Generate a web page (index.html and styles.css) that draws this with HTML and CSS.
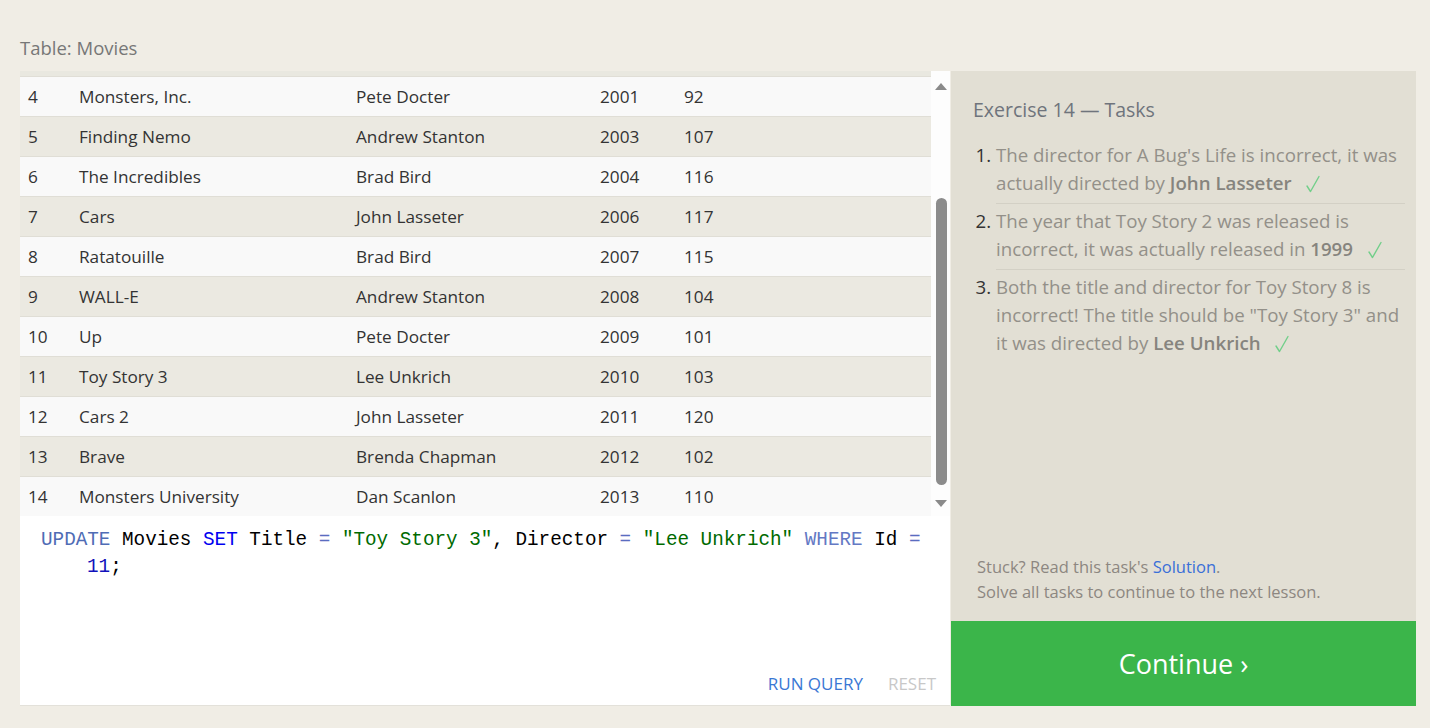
FILE: index.html
```html
<!DOCTYPE html>
<html>
<head>
<meta charset="utf-8">
<link rel="stylesheet" href="styles.css">
</head>
<body>
<div class="page">
  <div class="label">Table: Movies</div>
  <div class="workspace">
    <div class="left">
      <div class="table-wrap">
        <div class="viewport">
          <div class="cut-row"></div>
          <div class="row"><span class="c1">4</span><span class="c2">Monsters, Inc.</span><span class="c3">Pete Docter</span><span class="c4">2001</span><span class="c5">92</span></div>
          <div class="row alt"><span class="c1">5</span><span class="c2">Finding Nemo</span><span class="c3">Andrew Stanton</span><span class="c4">2003</span><span class="c5">107</span></div>
          <div class="row"><span class="c1">6</span><span class="c2">The Incredibles</span><span class="c3">Brad Bird</span><span class="c4">2004</span><span class="c5">116</span></div>
          <div class="row alt"><span class="c1">7</span><span class="c2">Cars</span><span class="c3">John Lasseter</span><span class="c4">2006</span><span class="c5">117</span></div>
          <div class="row"><span class="c1">8</span><span class="c2">Ratatouille</span><span class="c3">Brad Bird</span><span class="c4">2007</span><span class="c5">115</span></div>
          <div class="row alt"><span class="c1">9</span><span class="c2">WALL-E</span><span class="c3">Andrew Stanton</span><span class="c4">2008</span><span class="c5">104</span></div>
          <div class="row"><span class="c1">10</span><span class="c2">Up</span><span class="c3">Pete Docter</span><span class="c4">2009</span><span class="c5">101</span></div>
          <div class="row alt"><span class="c1">11</span><span class="c2">Toy Story 3</span><span class="c3">Lee Unkrich</span><span class="c4">2010</span><span class="c5">103</span></div>
          <div class="row"><span class="c1">12</span><span class="c2">Cars 2</span><span class="c3">John Lasseter</span><span class="c4">2011</span><span class="c5">120</span></div>
          <div class="row alt"><span class="c1">13</span><span class="c2">Brave</span><span class="c3">Brenda Chapman</span><span class="c4">2012</span><span class="c5">102</span></div>
          <div class="row"><span class="c1">14</span><span class="c2">Monsters University</span><span class="c3">Dan Scanlon</span><span class="c4">2013</span><span class="c5">110</span></div>
        </div>
        <div class="scrollbar">
          <div class="arrow up"></div>
          <div class="track"><div class="thumb"></div></div>
          <div class="arrow down"></div>
        </div>
      </div>
      <div class="editor">
        <div class="code">
          <div class="line"><span class="kw">UPDATE</span> Movies <span class="kw2">SET</span> Title <span class="op">=</span> <span class="str">"Toy Story 3"</span>, Director <span class="op">=</span> <span class="str">"Lee Unkrich"</span> <span class="kw3">WHERE</span> Id <span class="op">=</span></div>
          <div class="line indent"><span class="num">11</span>;</div>
        </div>
        <div class="actions">
          <span class="btn run">RUN QUERY</span>
          <span class="btn reset">RESET</span>
        </div>
      </div>
    </div>
    <div class="right">
      <div class="tasks">
        <h2 class="heading">Exercise 14 — Tasks</h2>
        <ol class="task-list">
          <li>The director for A Bug's Life is incorrect, it was actually directed by <b>John Lasseter</b> <svg class="check" width="14" height="18" viewBox="0 0 14 18"><polyline points="1,11 4.5,16.5 13,1.5" fill="none" stroke="#72cf8a" stroke-width="1.4" stroke-linecap="round" stroke-linejoin="round"/></svg></li>
          <li>The year that Toy Story 2 was released is incorrect, it was actually released in <b>1999</b> <svg class="check" width="14" height="18" viewBox="0 0 14 18"><polyline points="1,11 4.5,16.5 13,1.5" fill="none" stroke="#72cf8a" stroke-width="1.4" stroke-linecap="round" stroke-linejoin="round"/></svg></li>
          <li>Both the title and director for Toy Story 8 is incorrect! The title should be "Toy Story 3" and it was directed by <b>Lee Unkrich</b> <svg class="check" width="14" height="18" viewBox="0 0 14 18"><polyline points="1,11 4.5,16.5 13,1.5" fill="none" stroke="#72cf8a" stroke-width="1.4" stroke-linecap="round" stroke-linejoin="round"/></svg></li>
        </ol>
      </div>
      <div class="help">
        <div>Stuck? Read this task's <span class="link">Solution</span>.</div>
        <div>Solve all tasks to continue to the next lesson.</div>
      </div>
      <div class="continue">Continue ›</div>
    </div>
  </div>
</div>
</body>
</html>
```

FILE: styles.css
```css
* { box-sizing: border-box; }
html, body { margin: 0; padding: 0; }
body {
  background: #f0ede5;
  font-family: "Open Sans", "Noto Sans", sans-serif;
  color: #333;
  width: 1430px;
  height: 728px;
  overflow: hidden;
}
.page { padding: 0 14px 0 20px; }
.label {
  padding-top: 35px;
  height: 71px;
  font-size: 18.5px;
  line-height: 26px;
  color: #777;
}
.workspace { display: flex; height: 635px; }
.left { width: 930px; display: flex; flex-direction: column; }
.table-wrap { display: flex; height: 445px; flex: none; background: #fff; }
.viewport { width: 911px; overflow: hidden; }
.cut-row { height: 6px; background: #e9e8e0; border-bottom: 1px solid #e0ded6; }
.row {
  display: flex;
  height: 40px;
  align-items: center;
  background: #f9f9f9;
  border-bottom: 1px solid #e0ded6;
  font-size: 17.2px;
  color: #333;
}
.row.alt { background: #ebe9e1; }
.row span { padding-left: 8px; white-space: nowrap; }
.c1 { width: 51px; }
.c2 { width: 277px; }
.c3 { width: 244px; }
.c4 { width: 84px; }
.c5 { flex: 1; }
.scrollbar {
  width: 19px;
  background: #fdfdfd;
  display: flex;
  flex-direction: column;
  align-items: center;
  padding: 12px 0 9px;
}
.arrow { width: 0; height: 0; border-left: 6px solid transparent; border-right: 6px solid transparent; }
.arrow.up { border-bottom: 7px solid #8a8a8a; }
.arrow.down { border-top: 7px solid #8a8a8a; }
.track { flex: 1; width: 100%; display: flex; justify-content: center; padding-top: 108px; padding-bottom: 10px; }
.thumb { width: 11px; height: 287px; background: #8c8c8c; border-radius: 6px; margin-left: 1px; }
.editor {
  flex: 1;
  min-height: 0;
  overflow: hidden;
  background: #fff;
  border-bottom: 1px solid #e3e1da;
  display: flex;
  flex-direction: column;
  justify-content: space-between;
  padding: 9px 14px 9px 21px;
}
.code {
  font-family: "Liberation Mono", "DejaVu Sans Mono", monospace;
  font-size: 19.3px;
  line-height: 30px;
  color: #000;
}
.line { white-space: pre; }
.indent { padding-left: 46px; margin-top: -3px; }
.kw { color: #4f6cb5; }
.kw2 { color: #0000f0; }
.kw3 { color: #6479c4; }
.op { color: #5a6cc0; }
.str { color: #006a00; }
.num { color: #1111bb; }
.actions { display: flex; justify-content: flex-end; gap: 25px; font-size: 17px; line-height: 24px; }
.btn.run { color: #3a77d4; }
.btn.reset { color: #c8c8c8; }
.right {
  width: 465px;
  margin-left: 1px;
  background: #e2dfd4;
  display: flex;
  flex-direction: column;
}
.tasks { flex: 1; padding: 25px 11px 0 22px; }
.heading {
  margin: 0 0 14px;
  font-weight: normal;
  font-size: 19.5px;
  line-height: 28px;
  color: #6f747c;
}
.task-list {
  margin: 0;
  padding-left: 23px;
  font-size: 18.7px;
  line-height: 28px;
  color: #939089;
}
.task-list li { padding: 3px 0 6px; border-bottom: 1px solid #d3d0c5; }
.task-list li:last-child { border-bottom: none; }
.task-list li::marker { color: #333; }
.task-list b { color: #86847e; font-weight: 600; }
.check { margin-left: 10px; vertical-align: -3px; }
.help {
  padding: 0 0 17px 26px;
  font-size: 16.5px;
  line-height: 25px;
  color: #8d8781;
}
.link { color: #3a6fd8; }
.continue {
  height: 85px;
  background: #3bb54a;
  color: #fff;
  font-size: 27px;
  display: flex;
  align-items: center;
  justify-content: center;
}
```
